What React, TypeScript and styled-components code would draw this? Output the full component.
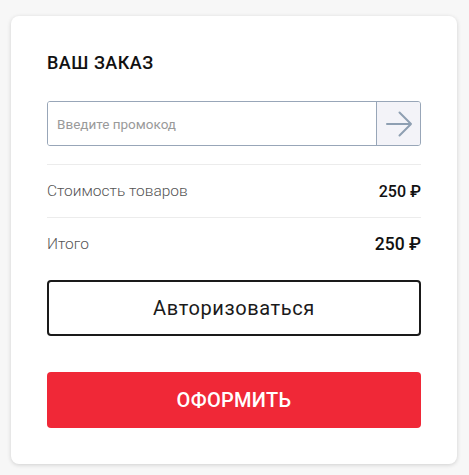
import React from "react";
import styled, { createGlobalStyle } from "styled-components";

const Global = createGlobalStyle`
  html, body { margin: 0; padding: 0; background: #f7f7f7; }
  body { font-family: Roboto, "Noto Sans", sans-serif; }
  * { box-sizing: border-box; }
`;

const Page = styled.div`
  padding: 16px 12px 11px 11px;
`;

const Card = styled.div`
  width: 446px;
  background: #fff;
  border-radius: 8px;
  box-shadow: 0 1px 4px rgba(0, 0, 0, 0.16);
  padding: 36px;
  display: flex;
  flex-direction: column;
`;

const Title = styled.h2`
  margin: 0;
  font-size: 18px;
  line-height: 22px;
  font-weight: 500;
  color: #111;
  letter-spacing: 0.5px;
`;

const Promo = styled.div`
  margin-top: 27px;
  display: flex;
  height: 45px;
  border: 1px solid #98a6b8;
  border-radius: 3px;
  overflow: hidden;
`;

const PromoInput = styled.input`
  flex: 1;
  min-width: 0;
  border: none;
  outline: none;
  padding: 0 9px;
  font-family: Roboto, sans-serif;
  font-size: 13.5px;
  color: #333;
  &::placeholder { color: #9a9a9a; }
`;

const PromoButton = styled.button`
  width: 44px;
  border: none;
  border-left: 1px solid #98a6b8;
  background: #f3f3f8;
  display: flex;
  align-items: center;
  justify-content: center;
  padding: 0;
  cursor: pointer;
`;

const Rows = styled.div`
  margin-top: 18px;
  display: flex;
  flex-direction: column;
`;

const Row = styled.div`
  height: 53px;
  display: flex;
  align-items: center;
  justify-content: space-between;
  border-top: 1px solid #ececec;
`;

const Label = styled.span`
  font-size: 15.5px;
  font-weight: 300;
  color: #555;
`;

const Value = styled.span<{ $big?: boolean }>`
  font-size: ${(p) => (p.$big ? "17.5px" : "16px")};
  font-weight: 500;
  color: #111;
`;

const AuthButton = styled.button`
  margin-top: 10px;
  height: 56px;
  border: 2px solid #1a1a1a;
  border-radius: 4px;
  background: #fff;
  font-family: Roboto, sans-serif;
  font-size: 20px;
  font-weight: 400;
  letter-spacing: 0.6px;
  color: #1a1a1a;
  cursor: pointer;
`;

const OrderButton = styled.button`
  margin-top: 36px;
  height: 56px;
  border: none;
  border-radius: 4px;
  background: #f02837;
  color: #fff;
  font-family: Roboto, sans-serif;
  font-size: 20px;
  font-weight: 500;
  letter-spacing: 0.3px;
  cursor: pointer;
`;

const Arrow = () => (
  <svg width="28" height="26" viewBox="0 0 28 26" fill="none">
    <path d="M2 13H26M14.5 1.5L26 13L14.5 24.5" stroke="#8e9fb2" strokeWidth="2" strokeLinecap="round" strokeLinejoin="round" />
  </svg>
);

export default function App() {
  return (
    <>
      <Global />
      <Page>
        <Card>
          <Title>ВАШ ЗАКАЗ</Title>
          <Promo>
            <PromoInput placeholder="Введите промокод" />
            <PromoButton aria-label="Применить">
              <Arrow />
            </PromoButton>
          </Promo>
          <Rows>
            <Row>
              <Label>Стоимость товаров</Label>
              <Value>250 ₽</Value>
            </Row>
            <Row>
              <Label>Итого</Label>
              <Value $big>250 ₽</Value>
            </Row>
          </Rows>
          <AuthButton>Авторизоваться</AuthButton>
          <OrderButton>ОФОРМИТЬ</OrderButton>
        </Card>
      </Page>
    </>
  );
}
